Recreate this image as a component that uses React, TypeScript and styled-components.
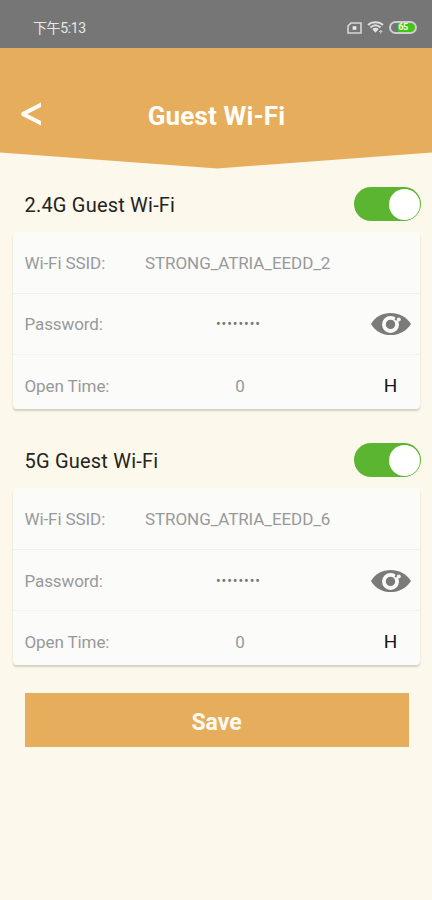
import React from "react";
import styled, { createGlobalStyle } from "styled-components";

const GlobalStyle = createGlobalStyle`
  * { box-sizing: border-box; }
  body { margin: 0; background: #fcf8eb; }
`;

const Screen = styled.div`
  display: flex;
  flex-direction: column;
  width: 432px;
  height: 900px;
  overflow: hidden;
  background: #fcf8eb;
  font-family: Roboto, "Noto Sans CJK SC", sans-serif;
`;

const StatusBar = styled.div`
  display: flex;
  flex: none;
  align-items: center;
  justify-content: space-between;
  height: 48px;
  padding: 7px 15px 0 33px;
  background: #767676;
  color: #e8e8e8;
`;

const Clock = styled.span`
  font-size: 14px;
  line-height: 20px;
  letter-spacing: -0.4px;
`;

const StatusIcons = styled.div`
  display: flex;
  align-items: center;
  gap: 5px;
  svg { display: block; }
`;

const Battery = styled.div`
  display: flex;
  align-items: center;
  justify-content: center;
  width: 28px;
  height: 13px;
  border: 2px solid #cfcfcf;
  border-radius: 7px;
  background: linear-gradient(to right, #767676 0 30%, #43c614 30% 100%);
  background-clip: padding-box;
  color: #f4fff0;
  font-size: 9px;
  font-weight: 700;
  line-height: 9px;
  letter-spacing: -0.4px;
`;

const Header = styled.header`
  display: grid;
  grid-template-columns: 64px 1fr 63px;
  flex: none;
  height: 121px;
  padding-top: 53px;
  background: #e6ae5c;
  clip-path: polygon(0 0, 100% 0, 100% 104.5px, 50.3% 120.5px, 0 104.5px);
`;

const BackButton = styled.button`
  display: block;
  width: 44px;
  height: 26px;
  padding: 0 0 0 21px;
  border: 0;
  background: none;
  svg { display: block; }
`;

const PageTitle = styled.h1`
  margin: 0;
  color: #fffdf8;
  font-size: 26px;
  font-weight: 700;
  line-height: 31px;
  letter-spacing: 0.15px;
  text-align: center;
  white-space: nowrap;
`;

const Content = styled.main`
  display: flex;
  flex-direction: column;
  gap: 34.4px;
  padding: 18px 11px 0 12px;
`;

const Section = styled.section`
  height: 222px;
`;

const SectionHead = styled.div`
  display: flex;
  justify-content: space-between;
  height: 45px;
  padding-left: 12.5px;
`;

const SectionTitle = styled.h2`
  margin: 0;
  color: #242320;
  font-size: 20px;
  font-weight: 400;
  line-height: 37px;
  letter-spacing: 0.2px;
`;

const Switch = styled.button`
  display: flex;
  justify-content: flex-end;
  align-items: center;
  width: 67.5px;
  height: 34px;
  padding: 0 1.5px;
  border: 0;
  border-radius: 17px;
  background: #5bb531;
`;

const Knob = styled.span`
  width: 31px;
  height: 31px;
  border-radius: 50%;
  background: #fff;
`;

const Card = styled.div`
  width: 407.5px;
  height: 176.5px;
  margin-left: 0.5px;
  border-radius: 4px;
  background: #fbfbfa;
  box-shadow: 0 2px 2px rgba(90, 85, 60, 0.24);
`;

const Row = styled.div<{ $height: number; $line?: string }>`
  display: grid;
  grid-template-columns: 120.5px 214px 1fr;
  align-items: center;
  height: ${(p) => p.$height}px;
  padding: 1px 0 0 12px;
  border-bottom: ${(p) => (p.$line ? `1px solid ${p.$line}` : "0")};
  color: #999;
  font-size: 17px;
  line-height: 20px;
`;

const Label = styled.span`
  letter-spacing: -0.1px;
  white-space: nowrap;
`;

const Value = styled.span<{ $centered?: boolean }>`
  display: flex;
  justify-content: ${(p) => (p.$centered ? "center" : "flex-start")};
  padding-right: ${(p) => (p.$centered ? "24px" : "0")};
  letter-spacing: -0.08px;
  white-space: nowrap;
`;

const Mask = styled.span`
  margin-left: -3px;
  color: #777;
  font-size: 14px;
  letter-spacing: 0.9px;
`;

const Action = styled.span`
  display: flex;
  justify-content: center;
  padding-left: 2px;
  color: #161616;
  font-size: 19px;
`;

const SaveButton = styled.button`
  flex: none;
  height: 54px;
  margin: 28px 23.5px 0 24.5px;
  padding: 5px 0 0;
  border: 0;
  background: #e6ae5c;
  color: #fffaf0;
  font: 700 23px/30px Roboto, sans-serif;
`;

const SimIcon = () => (
  <svg width="15" height="12" viewBox="0 0 15 12" fill="none">
    <path d="M4 1H14V11H1V4Z" stroke="#d8d8d8" strokeWidth="1.6" />
    <rect x="5.6" y="4.2" width="3.8" height="3.6" fill="#e8e8e8" />
  </svg>
);

const WifiIcon = () => (
  <svg width="17" height="13" viewBox="0 0 17 13" fill="none">
    <path d="M1 4C5 .4 12 .4 16 4M3.4 6.5C6.5 3.8 10.5 3.8 13.6 6.5" stroke="#dedede" strokeWidth="2" />
    <path d="M5.3 8Q8.5 5.4 11.7 8L8.5 11.8Z" fill="#e4e4e4" />
    <path d="M12 10.5H15.5M13.8 9V12.5" stroke="#c8c8c8" strokeWidth="1.2" />
  </svg>
);

const BackIcon = () => (
  <svg width="22" height="26" viewBox="0 0 22 26">
    <path d="M20 1.5V6L6.3 13L20 20V24.5L.4 14.6V11.6Z" fill="#fffdf8" />
  </svg>
);

const EyeIcon = () => (
  <svg width="40" height="24" viewBox="0 0 40 24">
    <path d="M0 12C8 -2.8 31 -2.8 40 12C31 26.8 8 26.8 0 12Z" fill="#7b7b7b" />
    <circle cx="19.5" cy="12.4" r="6.6" fill="none" stroke="#fbfbfa" strokeWidth="3.8" />
    <path d="M15.8 10.8Q18.2 7.6 21.8 9.9Q24.8 14.3 19.9 16.2Q21 12.6 15.8 10.8Z" fill="#7b7b7b" />
    <circle cx="25" cy="7.3" r="1.2" fill="#7b7b7b" />
    <circle cx="27.8" cy="7.4" r="2" fill="#f4f4f4" />
  </svg>
);

const GuestNetwork = ({ title, ssid }: { title: string; ssid: string }) => (
  <Section>
    <SectionHead>
      <SectionTitle>{title}</SectionTitle>
      <Switch role="switch" aria-checked="true" aria-label={title}>
        <Knob />
      </Switch>
    </SectionHead>
    <Card>
      <Row $height={61.5} $line="#eeefef">
        <Label>Wi-Fi SSID:</Label>
        <Value>{ssid}</Value>
      </Row>
      <Row $height={61.5} $line="#f2f3f3">
        <Label>Password:</Label>
        <Value $centered>
          <Mask>••••••••</Mask>
        </Value>
        <Action>
          <EyeIcon />
        </Action>
      </Row>
      <Row $height={60}>
        <Label>Open Time:</Label>
        <Value $centered>0</Value>
        <Action>H</Action>
      </Row>
    </Card>
  </Section>
);

export default function App() {
  return (
    <>
      <GlobalStyle />
      <Screen>
        <StatusBar>
          <Clock>下午5:13</Clock>
          <StatusIcons>
            <SimIcon />
            <WifiIcon />
            <Battery>65</Battery>
          </StatusIcons>
        </StatusBar>
        <Header>
          <BackButton aria-label="Back">
            <BackIcon />
          </BackButton>
          <PageTitle>Guest Wi-Fi</PageTitle>
        </Header>
        <Content>
          <GuestNetwork title="2.4G Guest Wi-Fi" ssid="STRONG_ATRIA_EEDD_2" />
          <GuestNetwork title="5G Guest Wi-Fi" ssid="STRONG_ATRIA_EEDD_6" />
        </Content>
        <SaveButton>Save</SaveButton>
      </Screen>
    </>
  );
}
